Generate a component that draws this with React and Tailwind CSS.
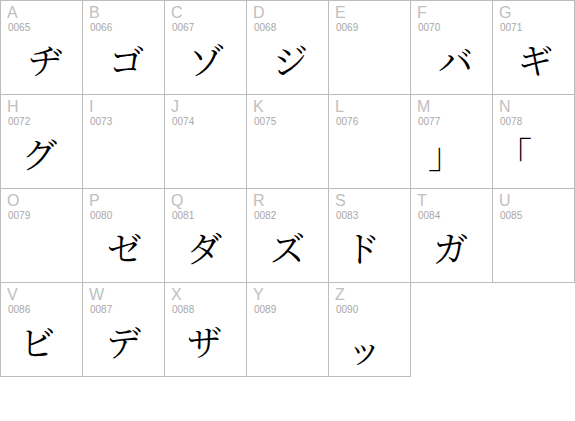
const cells = [
  { letter: 'A', code: '0065', glyph: 'ヂ', pos: 'pl-[27px]' },
  { letter: 'B', code: '0066', glyph: 'ゴ', pos: 'pl-[26px]' },
  { letter: 'C', code: '0067', glyph: 'ゾ', pos: 'pl-[24px]' },
  { letter: 'D', code: '0068', glyph: 'ジ', pos: 'pl-[26px]' },
  { letter: 'E', code: '0069', glyph: '', pos: '' },
  { letter: 'F', code: '0070', glyph: 'バ', pos: 'pl-[27px]' },
  { letter: 'G', code: '0071', glyph: 'ギ', pos: 'pl-[25px]' },
  { letter: 'H', code: '0072', glyph: 'グ', pos: 'pl-[21px]' },
  { letter: 'I', code: '0073', glyph: '', pos: '' },
  { letter: 'J', code: '0074', glyph: '', pos: '' },
  { letter: 'K', code: '0075', glyph: '', pos: '' },
  { letter: 'L', code: '0076', glyph: '', pos: '' },
  { letter: 'M', code: '0077', glyph: '」', pos: 'pl-[17px]' },
  { letter: 'N', code: '0078', glyph: '「', pos: 'pl-[4px]' },
  { letter: 'O', code: '0079', glyph: '', pos: '' },
  { letter: 'P', code: '0080', glyph: 'ゼ', pos: 'pl-[24px]' },
  { letter: 'Q', code: '0081', glyph: 'ダ', pos: 'pl-[22px]' },
  { letter: 'R', code: '0082', glyph: 'ズ', pos: 'pl-[23px]' },
  { letter: 'S', code: '0083', glyph: 'ド', pos: 'pl-[16px]' },
  { letter: 'T', code: '0084', glyph: 'ガ', pos: 'pl-[22px]' },
  { letter: 'U', code: '0085', glyph: '', pos: '' },
  { letter: 'V', code: '0086', glyph: 'ビ', pos: 'pl-[19px]' },
  { letter: 'W', code: '0087', glyph: 'デ', pos: 'pl-[23px]' },
  { letter: 'X', code: '0088', glyph: 'ザ', pos: 'pl-[22px]' },
  { letter: 'Y', code: '0089', glyph: '', pos: '' },
  { letter: 'Z', code: '0090', glyph: 'ッ', pos: 'pl-[18px] pt-[7px]' },
]

function Cell({ letter, code, glyph, pos }) {
  return (
    <div className="w-[82px] h-[94px] border-r border-b border-[#bdbdbd] flex flex-col">
      <div className="pl-[6px] pt-[3px] font-['Liberation_Sans',Arial,sans-serif] text-[#c0c0c0] text-[16px] leading-[18px]">
        {letter}
      </div>
      <div className="pl-[7px] font-['Liberation_Sans',Arial,sans-serif] text-[#a8a8a8] text-[10px] leading-[12px]">
        {code}
      </div>
      <div className={`${pos} mt-[7px] h-[40px] font-['Noto_Serif_CJK_JP','Noto_Sans_CJK_JP',serif] text-black text-[35px] leading-[36px]`}>
        {glyph}
      </div>
    </div>
  )
}

export default function App() {
  return (
    <div className="w-[575px] h-[421px] bg-white">
      <div className="grid grid-cols-[repeat(7,82px)] w-fit border-l border-t border-[#bdbdbd]">
        {cells.map((c) => (
          <Cell key={c.letter} {...c} />
        ))}
      </div>
    </div>
  )
}
